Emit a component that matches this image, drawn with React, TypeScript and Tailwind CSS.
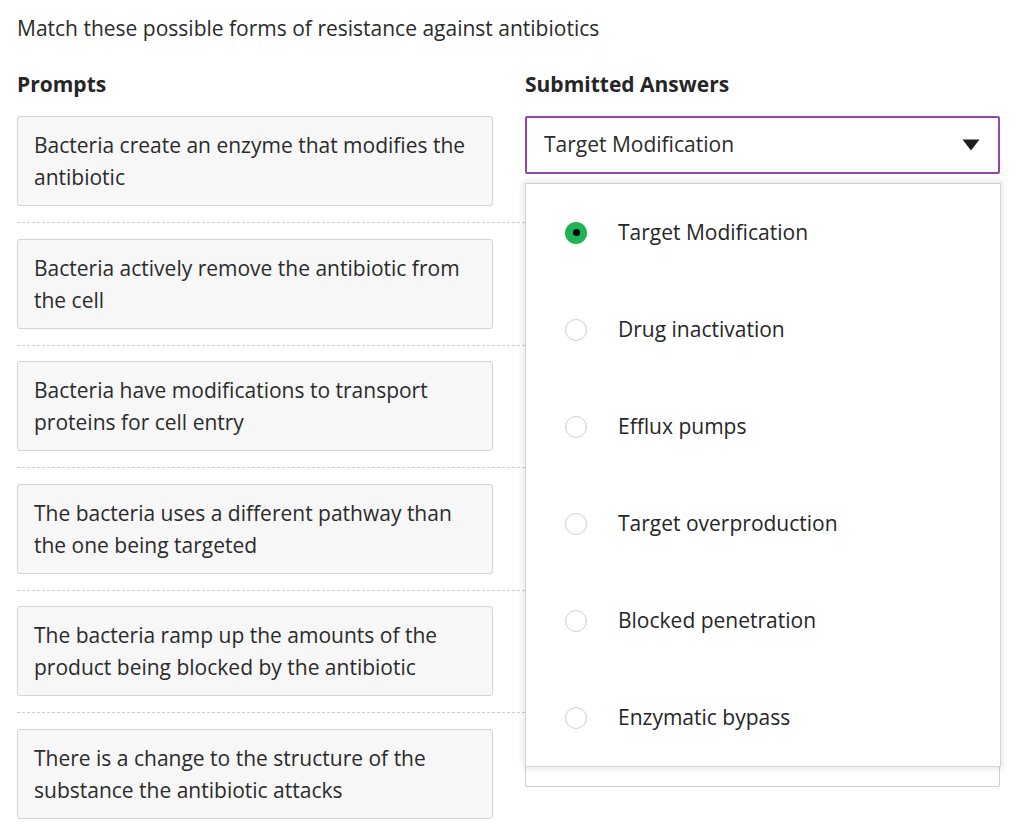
const prompts = [
  "Bacteria create an enzyme that modifies the antibiotic",
  "Bacteria actively remove the antibiotic from the cell",
  "Bacteria have modifications to transport proteins for cell entry",
  "The bacteria uses a different pathway than the one being targeted",
  "The bacteria ramp up the amounts of the product being blocked by the antibiotic",
  "There is a change to the structure of the substance the antibiotic attacks",
]

const options = [
  "Target Modification",
  "Drug inactivation",
  "Efflux pumps",
  "Target overproduction",
  "Blocked penetration",
  "Enzymatic bypass",
]

function Caret() {
  return (
    <svg width="18" height="12" viewBox="0 0 18 12" className="shrink-0">
      <path d="M0.5 0.5 H17.5 L9 11.5 Z" fill="#1f1f1f" />
    </svg>
  )
}

function Menu() {
  return (
    <div className="absolute left-0 top-[67px] w-[476px] z-10 bg-white border border-[#d2d2d2] shadow-[0_0_5px_3px_rgba(0,0,0,0.07)]">
      {options.map((o, i) => (
        <div key={o} className="flex items-center h-[97px] pl-[39px]">
          {i === 0 ? (
            <span className="flex items-center justify-center w-[22px] h-[22px] rounded-full bg-[#1db255]">
              <span className="w-[7px] h-[7px] rounded-full bg-black" />
            </span>
          ) : (
            <span className="w-[22px] h-[22px] rounded-full border border-[#cfcfcf] bg-white" />
          )}
          <span className="ml-[31px] text-[21px] text-[#262626]">{o}</span>
        </div>
      ))}
    </div>
  )
}

export default function App() {
  return (
    <div className="w-[1024px] h-[826px] overflow-hidden bg-white pl-[17px] pr-[24px] text-[#2b2b2b]" style={{ fontFamily: '"Open Sans", "Noto Sans", sans-serif' }}>
      <p className="pt-[14px] text-[21px] leading-[28px]">Match these possible forms of resistance against antibiotics</p>

      <div className="grid grid-cols-[476px_475px] gap-x-[32px] mt-[28px]">
        <h2 className="text-[21px] leading-[28px] font-bold text-[#262626]">Prompts</h2>
        <h2 className="text-[21px] leading-[28px] font-bold text-[#262626]">Submitted Answers</h2>
      </div>

      <div className="mt-[18px] flex flex-col">
        {prompts.map((p, i) => (
          <div key={p}>
            {i > 0 && <div className="mt-[16px] mb-[15.5px] border-t border-dashed border-[#cdcdcd]" />}
            <div className="grid grid-cols-[476px_475px] gap-x-[32px] items-start">
              <div className="h-[90px] rounded-[3px] border border-[#d4d4d4] bg-[#f7f7f7] px-[16px] py-[12px] text-[21px] leading-[32px]">
                {p}
              </div>
              <div className="relative">
                {i === 0 ? (
                  <>
                    <div className="h-[58px] flex items-center justify-between rounded-[2px] border-2 border-[#9845ab] pl-[17px] pr-[18px] text-[21px]">
                      <span>Target Modification</span>
                      <Caret />
                    </div>
                    <Menu />
                  </>
                ) : (
                  <div className="h-[58px] rounded-[2px] border border-[#cfcfcf] bg-white" />
                )}
              </div>
            </div>
          </div>
        ))}
      </div>
    </div>
  )
}
